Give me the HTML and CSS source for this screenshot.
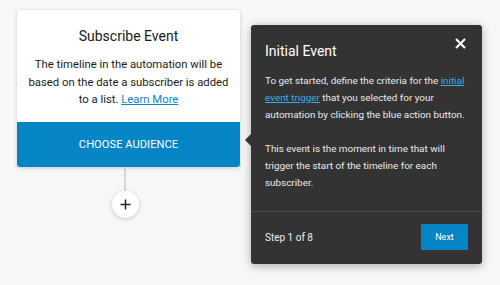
FILE: index.html
```html
<!DOCTYPE html>
<html>
<head>
<meta charset="utf-8">
<link rel="stylesheet" href="styles.css">
</head>
<body>
<div class="canvas">
  <div class="flow">
    <div class="card">
      <div class="card-body">
        <h2 class="card-title">Subscribe Event</h2>
        <p class="card-text">The timeline in the automation will be based on the date a subscriber is added to a list. <a href="#" class="link">Learn More</a></p>
      </div>
      <div class="card-action">CHOOSE AUDIENCE</div>
    </div>
    <div class="connector"></div>
    <div class="add">
      <svg width="11" height="11" viewBox="0 0 11 11"><path d="M5.5 0.5v10M0.5 5.5h10" stroke="#222" stroke-width="1.5"/></svg>
    </div>
  </div>
  <div class="tip">
    <div class="tip-arrow"></div>
    <div class="tip-body">
      <div class="tip-head">
        <h3 class="tip-title">Initial Event</h3>
        <svg class="tip-close" width="11" height="11" viewBox="0 0 11 11"><path d="M1 1l9 9M10 1l-9 9" stroke="#fff" stroke-width="2"/></svg>
      </div>
      <p class="tip-text">To get started, define the criteria for the <a href="#" class="tip-link">initial event trigger</a> that you selected for your automation by clicking the blue action button.</p>
      <p class="tip-text">This event is the moment in time that will trigger the start of the timeline for each subscriber.</p>
    </div>
    <div class="tip-foot">
      <span class="step">Step 1 of 8</span>
      <button class="next">Next</button>
    </div>
  </div>
</div>
</body>
</html>
```
FILE: styles.css
```css
html, body { margin: 0; padding: 0; }
body {
  background: #f7f7f7;
  font-family: Roboto, "Noto Sans", sans-serif;
  width: 500px;
  height: 285px;
  overflow: hidden;
}
.canvas {
  display: flex;
  align-items: flex-start;
  padding: 10px 0 0 17px;
}
.flow {
  display: flex;
  flex-direction: column;
  align-items: center;
  width: 223px;
}
.card {
  width: 223px;
  background: #fff;
  border-radius: 3px;
  box-shadow: 0 1px 4px rgba(0,0,0,0.18);
  overflow: hidden;
}
.card-body {
  padding: 16px 8px 12px;
  text-align: center;
  height: 84px;
}
.card-title {
  margin: 0;
  font-size: 14px;
  font-weight: 400;
  color: #1a1a1a;
  line-height: 20px;
}
.card-text {
  margin: 10px 0 0;
  font-size: 11.3px;
  line-height: 17.5px;
  color: #1a1a1a;
}
.link { color: #0b85c7; text-decoration: underline; }
.card-action {
  background: #0584c6;
  color: #fff;
  height: 45px;
  display: flex;
  align-items: center;
  justify-content: center;
  font-size: 11.2px;
}
.connector {
  width: 2px;
  height: 24px;
  background: #d6d6d6;
  margin-right: 7px;
}
.add {
  width: 27px;
  height: 27px;
  border-radius: 50%;
  background: #fff;
  box-shadow: 0 1px 4px rgba(0,0,0,0.2);
  display: flex;
  align-items: center;
  justify-content: center;
  margin-right: 7px;
}
.tip {
  position: relative;
  margin: 15px 0 0 11px;
  width: 231px;
  background: #333;
  border-radius: 3px;
  box-shadow: 0 2px 10px rgba(0,0,0,0.3);
  color: #eee;
}
.tip-arrow {
  position: absolute;
  left: -6px;
  top: 109px;
  width: 0;
  height: 0;
  border-top: 6px solid transparent;
  border-bottom: 6px solid transparent;
  border-right: 6px solid #333;
}
.tip-body {
  padding: 13px 14px 20px;
  border-bottom: 1px solid #4a4a4a;
}
.tip-head {
  display: flex;
  justify-content: space-between;
  align-items: flex-start;
}
.tip-title {
  margin: 3px 0 0;
  font-size: 14px;
  font-weight: 400;
  color: #fff;
  line-height: 20px;
}
.tip-close { margin: 0 2px 0 0; }
.tip-text {
  margin: 11px 0 0;
  font-size: 9.9px;
  line-height: 17px;
  color: #eaeaea;
}
.tip-text + .tip-text { margin-top: 17px; }
.tip-link { color: #35b0e6; text-decoration: underline; }
.tip-foot {
  display: flex;
  justify-content: space-between;
  align-items: center;
  padding: 12px 14px 14px;
}
.step { font-size: 10px; color: #eee; }
.next {
  width: 47px;
  height: 26px;
  border: none;
  background: #0584c6;
  color: #fff;
  font-family: Roboto, sans-serif;
  font-size: 9px;
  padding: 0;
}
```
